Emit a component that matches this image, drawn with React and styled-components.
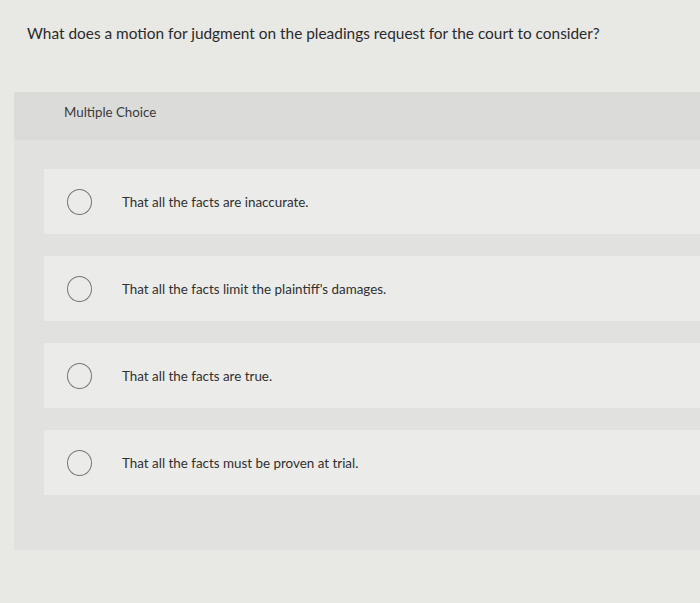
import React from "react";
import styled, { createGlobalStyle } from "styled-components";

const Global = createGlobalStyle`
  html, body { margin: 0; padding: 0; background: #e7e7e4; }
  body { font-family: Lato, "Open Sans", sans-serif; color: #333; }
`;

const Page = styled.div`
  width: 700px;
  height: 603px;
  overflow: hidden;
  background: #e8e8e5;
  display: flex;
  flex-direction: column;
`;

const Question = styled.h1`
  margin: 0;
  padding: 24px 0 0 27px;
  height: 92px;
  box-sizing: border-box;
  font-size: 15.4px;
  font-weight: 400;
  color: #2b2b2b;
`;

const Panel = styled.section`
  margin-left: 14px;
  display: flex;
  flex-direction: column;
`;

const Header = styled.div`
  height: 48px;
  box-sizing: border-box;
  background: #dbdbd9;
  display: flex;
  align-items: flex-start;
  padding: 12px 0 0 50px;
  font-size: 13.3px;
  color: #3a3a3a;
`;

const Options = styled.div`
  background: #e1e1df;
  padding: 29px 0 55px 30px;
  display: flex;
  flex-direction: column;
  gap: 22px;
`;

const Card = styled.label`
  height: 65px;
  background: #ebebe9;
  display: flex;
  align-items: center;
  padding-left: 23px;
  gap: 30px;
  font-size: 13.4px;
  color: #303030;
`;

const Radio = styled.span`
  width: 25px;
  height: 26px;
  border-radius: 50%;
  border: 1.5px solid #777;
  box-sizing: border-box;
  flex: none;
`;

const Text = styled.span``;

const options = [
  "That all the facts are inaccurate.",
  "That all the facts limit the plaintiff's damages.",
  "That all the facts are true.",
  "That all the facts must be proven at trial.",
];

export default function App() {
  return (
    <>
      <Global />
      <Page>
        <Question>What does a motion for judgment on the pleadings request for the court to consider?</Question>
        <Panel>
          <Header>Multiple Choice</Header>
          <Options>
            {options.map((o) => (
              <Card key={o}>
                <Radio />
                <Text>{o}</Text>
              </Card>
            ))}
          </Options>
        </Panel>
      </Page>
    </>
  );
}
